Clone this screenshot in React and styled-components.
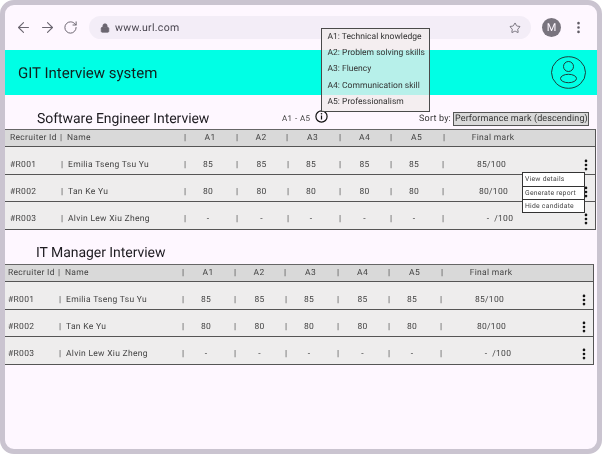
import React from 'react';
import styled, { createGlobalStyle } from 'styled-components';
import { ArrowLeft, ArrowRight, RotateCw, Lock, Star, MoreVertical } from 'lucide-react';

const Global = createGlobalStyle`
    html, body { margin: 0; padding: 0; background: #fff; }
    body { font-family: Roboto, "Liberation Sans", sans-serif; color: #1d1b20; text-rendering: geometricPrecision; }
    * { box-sizing: border-box; }
`;

const Device = styled.div`
    width: 602px;
    height: 454px;
    border: 5px solid #cac4d0;
    border-radius: 14px;
    background: #fef7ff;
    overflow: hidden;
    will-change: transform;
`;
const Toolbar = styled.div`
    height: 45px;
    display: flex;
    align-items: center;
    padding: 0 11px 0 10px;
`;
const NavIcons = styled.div`
    display: flex;
    align-items: center;
    gap: 7px;
    color: #6b6670;
`;
const UrlBar = styled.div`
    width: 442px;
    height: 23px;
    margin-left: 11px;
    padding: 0 10px 0 11px;
    border-radius: 12px;
    background: #f3edf7;
    display: flex;
    align-items: center;
    gap: 5px;
    font-size: 10.5px;
    letter-spacing: 0.3px;
    color: #49454f;
`;
const UrlText = styled.span`
    flex: 1;
`;
const Avatar = styled.div`
    width: 19px;
    height: 19px;
    margin-left: 11px;
    border-radius: 50%;
    background: #79747e;
    color: #fef7ff;
    font-size: 11px;
    display: flex;
    align-items: center;
    justify-content: center;
`;
const ToolbarMenu = styled.div`
    margin-left: 10px;
    display: flex;
    color: #5f5b64;
`;
const Band = styled.div`
    height: 45px;
    background: #00ffe5;
    display: flex;
    align-items: center;
    justify-content: space-between;
    padding: 0 11px 0 13px;
    font-size: 15px;
    color: #10201f;
`;
const TitleRow = styled.div`
    height: ${p => p.$height}px;
    padding: ${p => p.$top}px 8px 0 ${p => p.$left}px;
    display: flex;
    align-items: center;
`;
const Title = styled.h2`
    margin: 0;
    width: 245px;
    font-size: 14px;
    font-weight: 400;
    letter-spacing: -0.05px;
    color: #1d1b20;
`;
const RangeLabel = styled.span`
    font-size: 8px;
    letter-spacing: 0.4px;
    color: #444;
`;
const InfoWrap = styled.div`
    position: relative;
    margin: 0 0 5px 5px;
    display: flex;
`;
const Tooltip = styled.div`
    position: absolute;
    left: 6px;
    bottom: 11px;
    width: 109px;
    height: 84px;
    padding: 0 0 0 5px;
    border: 1px solid #4a4a4a;
    background: rgba(240, 235, 235, 0.76);
    font-size: 8.5px;
    letter-spacing: 0.03px;
    color: #333;
    display: flex;
    flex-direction: column;
    justify-content: space-around;
    white-space: nowrap;
`;
const SortBy = styled.div`
    margin-left: auto;
    display: flex;
    align-items: center;
    gap: 2px;
    font-size: 9px;
    letter-spacing: 0.2px;
    color: #333;
`;
const SortValue = styled.div`
    width: 136px;
    height: 14px;
    border: 1px solid #555;
    background: #d9d9d9;
    font-size: 9px;
    letter-spacing: 0.12px;
    line-height: 12px;
    padding-left: 1px;
    white-space: nowrap;
`;
const Table = styled.div`
    width: ${p => p.$width}px;
    font-size: 8.5px;
    letter-spacing: 0.3px;
    color: #444;
`;
const Row = styled.div`
    position: relative;
    height: ${p => p.$height}px;
    display: grid;
    grid-template-columns: ${p => (p.$head
        ? '50px 124px 52px 50px 53px 51px 53px 1fr'
        : '51px 123px 52px 51px 52px 51px 52px 1fr 24px')};
    align-items: center;
    padding-top: ${p => p.$drop || 0}px;
    padding-left: ${p => p.$inset}px;
    background: ${p => (p.$head ? '#d9d9d9' : '#eeeded')};
    border-bottom: 1px solid #555;
    border-right: 1px solid #555;
    border-top: ${p => (p.$head ? '1px solid #666' : '0')};
`;
const Cell = styled.div`
    display: flex;
    white-space: pre;
`;
const Sep = styled.span`
    width: 7px;
    flex: none;
`;
const Value = styled.span`
    flex: 1;
    text-align: ${p => (p.$left ? 'left' : 'center')};
    margin-right: ${p => (p.$left ? 0 : p.$nudge || 7)}px;
`;
const DotsCell = styled.div`
    display: flex;
    margin-left: 8px;
    color: #111;
`;
const RowMenu = styled.div`
    position: absolute;
    right: 10px;
    top: 25px;
    width: 63px;
    z-index: 2;
    background: #fff;
    border: 1px solid #333;
    font-size: 6.8px;
    letter-spacing: 0.25px;
    color: #444;
`;
const RowMenuItem = styled.div`
    height: 13px;
    line-height: 12px;
    padding-left: 2px;
    border-top: ${p => (p.$first ? '0' : '1px solid #333')};
`;

const COLS = ['A1', 'A2', 'A3', 'A4', 'A5'];
const MARK_NUDGE = [11, 7, 11, 7, 11];
const CANDIDATES = [
    { id: '#R001', name: 'Emilia Tseng Tsu Yu', marks: ['85', '85', '85', '85', '85'], final: '85/100', nudge: 37, height: 28, drop: 8 },
    { id: '#R002', name: 'Tan Ke Yu', marks: ['80', '80', '80', '80', '80'], final: '80/100', nudge: 33, height: 27, drop: 8 },
    { id: '#R003', name: 'Alvin Lew Xiu Zheng', marks: ['-', '-', '-', '-', '-'], final: '-  /100', nudge: 20, height: 28, drop: 7 },
];

const InfoIcon = () => (
    <svg width="13" height="13" viewBox="0 0 13 13" fill="none">
        <circle cx="6.5" cy="6.5" r="5.6" stroke="#111" strokeWidth="1.2" />
        <path d="M6.5 5.6v4" stroke="#111" strokeWidth="1.2" />
        <circle cx="6.5" cy="3.7" r="0.8" fill="#111" />
    </svg>
);

const ProfileIcon = () => (
    <svg width="35" height="33" viewBox="0 0 35 33" fill="none" stroke="#1f2a2a" strokeWidth="0.9">
        <ellipse cx="17.5" cy="16.5" rx="17" ry="15.8" />
        <circle cx="17.5" cy="10.5" r="5" />
        <ellipse cx="17.5" cy="22.5" rx="8" ry="4.2" />
    </svg>
);

const InterviewTable = ({ inset, width, showMenu }) => (
    <Table $width={width}>
        <Row $head $height={18} $inset={inset}>
            <Cell>Recruiter Id</Cell>
            <Cell><Sep>|</Sep><Value $left>Name</Value></Cell>
            {COLS.map(c => (
                <Cell key={c}><Sep>|</Sep><Value>{c}</Value></Cell>
            ))}
            <Cell><Sep>|</Sep><Value $nudge={59}>Final mark</Value></Cell>
        </Row>
        {CANDIDATES.map((r, i) => (
            <Row key={r.id} $height={r.height} $drop={r.drop} $inset={inset}>
                <Cell>{r.id}</Cell>
                <Cell><Sep>|</Sep><Value $left>{r.name}</Value></Cell>
                {r.marks.map((m, j) => (
                    <Cell key={j}><Sep>|</Sep><Value $nudge={MARK_NUDGE[j]}>{m}</Value></Cell>
                ))}
                <Cell><Sep>|</Sep><Value $nudge={r.nudge}>{r.final}</Value></Cell>
                <DotsCell><MoreVertical size={14} strokeWidth={2.6} /></DotsCell>
                {showMenu && i === 0 && (
                    <RowMenu>
                        <RowMenuItem $first>View details</RowMenuItem>
                        <RowMenuItem>Generate report</RowMenuItem>
                        <RowMenuItem>Hide candidate</RowMenuItem>
                    </RowMenu>
                )}
            </Row>
        ))}
    </Table>
);

const App = () => (
    <Device>
        <Global />
        <Toolbar>
            <NavIcons>
                <ArrowLeft size={17} strokeWidth={1.5} />
                <ArrowRight size={17} strokeWidth={1.5} />
                <RotateCw size={15} strokeWidth={1.6} />
            </NavIcons>
            <UrlBar>
                <Lock size={10} fill="#6b6670" color="#6b6670" />
                <UrlText>www.url.com</UrlText>
                <Star size={12} strokeWidth={1.4} />
            </UrlBar>
            <Avatar>M</Avatar>
            <ToolbarMenu><MoreVertical size={15} strokeWidth={2.2} /></ToolbarMenu>
        </Toolbar>
        <Band>
            GIT Interview system
            <ProfileIcon />
        </Band>
        <TitleRow $height={34} $top={13} $left={32}>
            <Title>Software Engineer Interview</Title>
            <RangeLabel>A1 - A5</RangeLabel>
            <InfoWrap>
                <InfoIcon />
                <Tooltip>
                    <span>A1: Technical knowledge</span>
                    <span>A2: Problem solving skills</span>
                    <span>A3: Fluency</span>
                    <span>A4: Communication skill</span>
                    <span>A5: Professionalism</span>
                </Tooltip>
            </InfoWrap>
            <SortBy>
                Sort by:
                <SortValue>Performance mark (descending)</SortValue>
            </SortBy>
        </TitleRow>
        <InterviewTable inset={5} width={591} showMenu />
        <TitleRow $height={34} $top={11} $left={31}>
            <Title>IT Manager Interview</Title>
        </TitleRow>
        <InterviewTable inset={3} width={589} />
    </Device>
);

export default App;
